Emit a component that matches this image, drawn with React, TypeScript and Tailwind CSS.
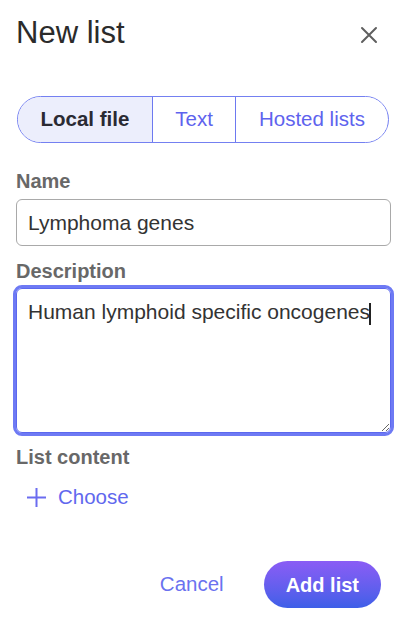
import { useState } from 'react';

const TABS = ['Local file', 'Text', 'Hosted lists'];

export default function App() {
  const [tab, setTab] = useState(0);

  return (
    <div className="h-[628px] w-[415px] bg-white pl-[16px] pr-[24px] font-['Liberation_Sans',Arial,sans-serif]">
      <div className="flex items-center justify-between pt-[15px]">
        <h1 className="text-[31px] leading-[36px] text-[#2b2b2b]">New list</h1>
        <button className="mr-[12px] mt-[4px] flex h-[20px] w-[20px] items-center justify-center text-[#5f5f5f]">
          <svg width="18" height="18" viewBox="0 0 18 18" fill="none" stroke="currentColor" strokeWidth="2" strokeLinecap="round">
            <path d="M2 2 16 16M16 2 2 16" />
          </svg>
        </button>
      </div>

      <div className="ml-[1px] mt-[45px] flex h-[47px] w-[372px] overflow-hidden rounded-full border-[1.5px] border-[#7480f1]">
        {TABS.map((t, i) => (
          <button
            key={t}
            onClick={() => setTab(i)}
            className={
              (i > 0 ? 'border-l-[1.5px] border-[#6d79f0] ' : '') +
              (i === tab
                ? 'bg-[#eceefc] font-bold text-[#2a2a33] '
                : 'bg-white text-[#5e63ee] ') +
              'flex items-center px-[22.5px] text-[20.5px] leading-none'
            }
          >
            {t}
          </button>
        ))}
      </div>

      <label className="mt-[26px] block text-[20px] font-bold leading-[24px] text-[#686868]">Name</label>
      <input
        defaultValue="Lymphoma genes"
        className="mt-[6px] block h-[47px] w-full rounded-[6px] border border-[#a9a9a9] px-[11px] text-[21px] text-[#333] outline-none"
      />

      <label className="mt-[13px] block text-[20px] font-bold leading-[24px] text-[#686868]">Description</label>
      <div className="relative mt-[5px]">
        <textarea
          defaultValue="Human lymphoid specific oncogenes"
          className="block h-[145px] w-full rounded-[6px] border border-[#5c68ee] px-[11px] pt-[11px] text-[21px] leading-[24px] text-[#333] outline-[3px] outline-[#6e7af4]"
        />
        <span className="absolute left-[353px] top-[15px] h-[22px] w-[1.5px] bg-[#222]" />
      </div>

      <label className="mt-[12px] block text-[20px] font-bold leading-[24px] text-[#686868]">List content</label>
      <button className="ml-[10px] mt-[16px] flex items-center gap-[11px] text-[20.5px] leading-[24px] text-[#6168ee]">
        <svg width="21" height="21" viewBox="0 0 21 21" fill="none" stroke="#6b6cf0" strokeWidth="2">
          <path d="M10.5 1v19M1 10.5h19" />
        </svg>
        Choose
      </button>

      <div className="mt-[52px] flex items-center justify-end gap-[40px] pr-[10px]">
        <button className="text-[20.5px] text-[#6a72ef]">Cancel</button>
        <button className="h-[47px] rounded-full bg-linear-to-b from-[#8a5cf5] to-[#3d5fe8] px-[22px] text-[20px] font-bold text-white">
          Add list
        </button>
      </div>
    </div>
  );
}
